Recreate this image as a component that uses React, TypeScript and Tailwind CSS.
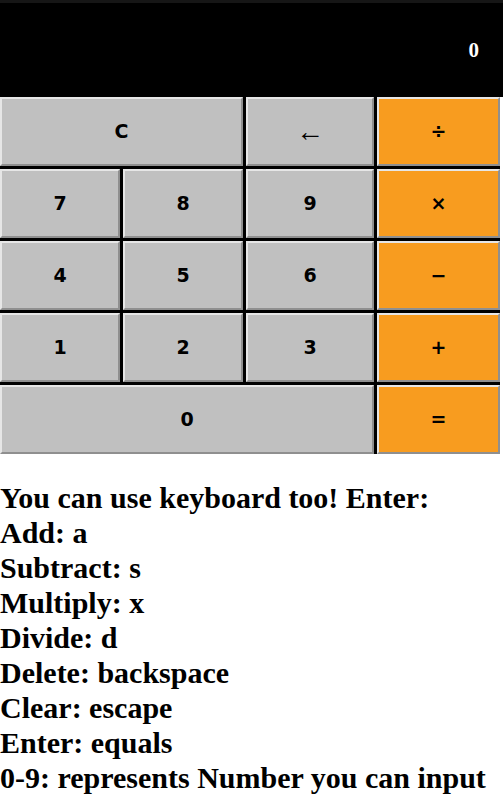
import React from "react";

const keys = [
  { label: "C", span: "col-span-2" },
  { label: "←", arrow: true },
  { label: "÷", op: true },
  { label: "7" },
  { label: "8" },
  { label: "9" },
  { label: "×", op: true },
  { label: "4" },
  { label: "5" },
  { label: "6" },
  { label: "−", op: true },
  { label: "1" },
  { label: "2" },
  { label: "3" },
  { label: "+", op: true },
  { label: "0", span: "col-span-3" },
  { label: "=", op: true },
];

const help = [
  "You can use keyboard too! Enter:",
  "Add: a",
  "Subtract: s",
  "Multiply: x",
  "Divide: d",
  "Delete: backspace",
  "Clear: escape",
  "Enter: equals",
  "0-9: represents Number you can input",
];

export default function App() {
  return (
    <div className="w-[503px] bg-white">
      {/* Display */}
      <div className="h-[97px] border-t-[3px] border-[#161616] bg-black flex items-center justify-end pr-[24px]">
        <span className="text-white font-bold text-[21px] font-['Liberation_Serif',serif] mt-[2px]">0</span>
      </div>

      {/* Keypad */}
      <div className="grid w-[500px] grid-cols-[120px_120px_128px_1fr] gap-[3px] bg-black">
        {keys.map((k, i) => (
          <button
            key={i}
            className={`h-[69px] border-2 border-t-[#e6e6e6] border-l-[#e6e6e6] border-b-[#8f8f8f] border-r-[#8f8f8f] flex items-center justify-center text-black ${
              k.arrow
                ? "text-[28px] leading-none font-normal font-['Liberation_Serif',serif]"
                : "text-[19px] font-bold font-['DejaVu_Sans',Verdana,sans-serif]"
            } ${k.op ? "bg-[#f89c1f]" : "bg-[#c0c0c0]"} ${k.span ?? ""}`}
          >
            {k.label}
          </button>
        ))}
      </div>

      {/* Help text */}
      <div className="pt-[26px] font-['Liberation_Serif',serif] font-bold text-[30px] leading-[35px] text-black">
        {help.map((line) => (
          <div key={line}>{line}</div>
        ))}
      </div>
    </div>
  );
}
